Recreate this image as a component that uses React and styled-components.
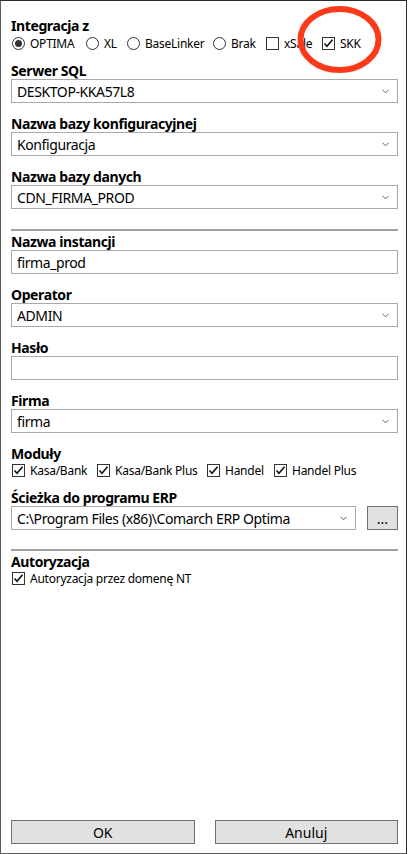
import styled, { createGlobalStyle } from "styled-components";

const GlobalStyle = createGlobalStyle`
  body {
    margin: 0;
    background: #fff;
    font-family: "Noto Sans", "Liberation Sans", sans-serif;
    color: #000;
  }
`;

const Window = styled.div`
  position: relative;
  width: 407px;
  height: 854px;
  box-sizing: border-box;
  border: 1px solid #2b2b2b;
  border-left-color: #5c5c5c;
  border-bottom-color: #5c5c5c;
  padding: 17px 8px 9px 10px;
  display: flex;
  flex-direction: column;
  background: #fff;
`;

const Label = styled.div`
  font-weight: 700;
  font-size: 14px;
  letter-spacing: -0.4px;
  line-height: 16px;
  height: 16px;
  white-space: nowrap;
`;

const Field = styled.div`
  display: flex;
  flex-direction: column;
  margin-top: ${({ $gap }) => $gap ?? 13}px;
`;

const OptionRow = styled.div`
  display: flex;
  align-items: center;
  height: ${({ $h }) => $h ?? 16}px;
`;

const Option = styled.label`
  display: flex;
  align-items: center;
  gap: 5px;
  width: ${({ $w }) => ($w ? `${$w}px` : "auto")};
  font-size: 12px;
  letter-spacing: -0.25px;
  white-space: nowrap;
  padding-left: 1px;
  box-sizing: border-box;
`;

const RadioMark = styled.span`
  width: 13px;
  height: 13px;
  box-sizing: border-box;
  border: 1px solid #333;
  border-radius: 50%;
  display: flex;
  align-items: center;
  justify-content: center;
  background: #fff;
  &::after {
    content: "";
    width: 7px;
    height: 7px;
    border-radius: 50%;
    background: ${({ $on }) => ($on ? "#333" : "transparent")};
  }
`;

const CheckMark = styled.span`
  width: 13px;
  height: 13px;
  box-sizing: border-box;
  border: 1px solid #333;
  background: #fff;
  display: flex;
  align-items: center;
  justify-content: center;
`;

const Box = styled.div`
  height: 24px;
  flex: none;
  box-sizing: border-box;
  border: 1px solid #a9a9a9;
  background: #fff;
  display: flex;
  align-items: center;
  padding: 0 8px 0 5px;
  font-size: 14px;
  letter-spacing: -0.4px;
  min-width: 0;
`;

const BoxText = styled.span`
  flex: 1;
  white-space: nowrap;
  overflow: hidden;
`;

const Separator = styled.div`
  height: 2px;
  flex: none;
  background: #a0a0a0;
  margin-top: ${({ $top }) => $top}px;
`;

const PathRow = styled.div`
  display: flex;
  gap: 11px;

  & > ${Box} {
    flex: 1;
  }
`;

const Button = styled.button`
  height: 24px;
  box-sizing: border-box;
  border: 1px solid #707070;
  background: #e1e1e1;
  font-family: inherit;
  font-size: 14px;
  color: #000;
  padding: 0;
  border-radius: 0;
  width: ${({ $w }) => ($w ? `${$w}px` : "auto")};
  flex: ${({ $w }) => ($w ? "none" : "1")};
`;

const Footer = styled.div`
  margin-top: auto;
  display: flex;
  gap: 20px;
`;

const Highlight = styled.svg`
  position: absolute;
  left: 290px;
  top: 0;
  pointer-events: none;
`;

const Chevron = () => (
  <svg width="7" height="5" viewBox="0 0 7 5">
    <polyline points="0.5,0.8 3.5,3.8 6.5,0.8" fill="none" stroke="#606060" strokeWidth="1" />
  </svg>
);

const Tick = () => (
  <svg width="11" height="11" viewBox="0 0 11 11">
    <polyline points="1.5,5.5 4,8.2 9.5,1.8" fill="none" stroke="#111" strokeWidth="1.6" />
  </svg>
);

const Radio = ({ label, on, w }) => (
  <Option $w={w}>
    <RadioMark $on={on} />
    {label}
  </Option>
);

const Check = ({ label, on, w }) => (
  <Option $w={w}>
    <CheckMark>{on && <Tick />}</CheckMark>
    {label}
  </Option>
);

const Combo = ({ value }) => (
  <Box>
    <BoxText>{value}</BoxText>
    <Chevron />
  </Box>
);

const SelectField = ({ label, value, gap }) => (
  <Field $gap={gap}>
    <Label>{label}</Label>
    <Combo value={value} />
  </Field>
);

const TextField = ({ label, value, gap }) => (
  <Field $gap={gap}>
    <Label>{label}</Label>
    <Box>
      <BoxText>{value}</BoxText>
    </Box>
  </Field>
);

export default function App() {
  return (
    <>
      <GlobalStyle />
      <Window>
        <Field $gap={0}>
          <Label>Integracja z</Label>
          <OptionRow $h={18}>
            <Radio label="OPTIMA" on w={74} />
            <Radio label="XL" w={41} />
            <Radio label="BaseLinker" w={86} />
            <Radio label="Brak" w={53} />
            <Check label="xSale" w={56} />
            <Check label="SKK" on />
          </OptionRow>
        </Field>
        <SelectField label="Serwer SQL" value="DESKTOP-KKA57L8" gap={11} />
        <SelectField label="Nazwa bazy konfiguracyjnej" value="Konfiguracja" />
        <SelectField label="Nazwa bazy danych" value="CDN_FIRMA_PROD" />
        <Separator $top={20} />
        <TextField label="Nazwa instancji" value="firma_prod" gap={3} />
        <SelectField label="Operator" value="ADMIN" />
        <TextField label="Hasło" value="" />
        <SelectField label="Firma" value="firma" />
        <Field>
          <Label>Moduły</Label>
          <OptionRow>
            <Check label="Kasa/Bank" on w={85} />
            <Check label="Kasa/Bank Plus" on w={110} />
            <Check label="Handel" on w={67} />
            <Check label="Handel Plus" on />
          </OptionRow>
        </Field>
        <Field $gap={12}>
          <Label>Ścieżka do programu ERP</Label>
          <PathRow>
            <Combo value="C:\Program Files (x86)\Comarch ERP Optima" />
            <Button $w={31}>...</Button>
          </PathRow>
        </Field>
        <Separator $top={19} />
        <Field $gap={3}>
          <Label>Autoryzacja</Label>
          <OptionRow>
            <Check label="Autoryzacja przez domenę NT" on />
          </OptionRow>
        </Field>
        <Footer>
          <Button>OK</Button>
          <Button>Anuluj</Button>
        </Footer>
        <Highlight width="100" height="80" viewBox="0 0 100 80">
          <ellipse cx="48.5" cy="38.5" rx="39" ry="30.5" fill="none" stroke="#fc3a1a" strokeWidth="6" />
        </Highlight>
      </Window>
    </>
  );
}
